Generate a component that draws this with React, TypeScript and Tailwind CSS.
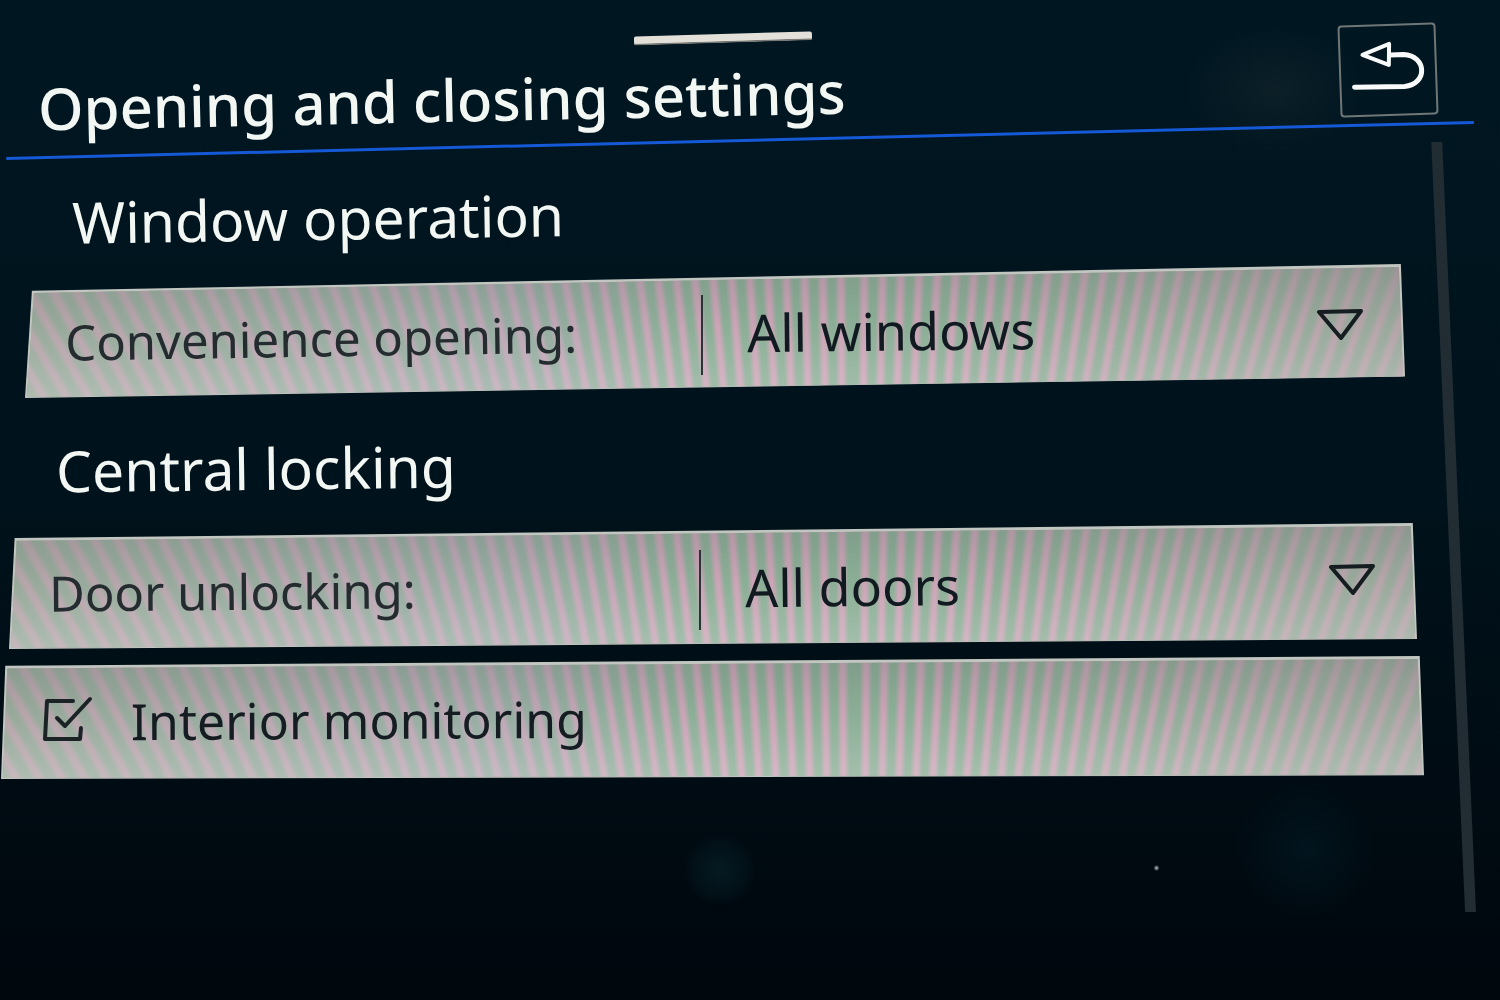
import { useState } from "react";
import type { ReactNode } from "react";

type PanelProps = {
    shape: string;
    className: string;
    children: ReactNode;
};

function Panel({ shape, className, children }: PanelProps) {
    return (
        <div className={`relative flex items-center ${className}`}>
            <div className={`absolute inset-0 bg-[#c2c6c0] ${shape}`} />
            <div className={`absolute inset-x-[2px] top-[3px] bottom-px bg-[#a5aaa4] ${shape}`}>
                <div className="absolute inset-0 bg-[repeating-conic-gradient(from_0deg_at_60%_1500px,#8bae96_0deg,#8bae96_0.2deg,#cba4b6_0.4deg,#cba4b6_0.5deg,#8bae96_0.7deg)]" />
                <div className="absolute inset-0 bg-[linear-gradient(90deg,#a3a59f88_0%,#a9a9b466_35%,#a0a9a000_50%,#a0a9a000_65%,#a5a5a199_100%)]" />
                <div className="absolute inset-0 bg-[linear-gradient(180deg,#5c666440_0%,#80808000_45%,#ffffff38_100%)]" />
            </div>
            {children}
        </div>
    );
}

type SelectRowProps = {
    id: string;
    label: string;
    options: string[];
    shape: string;
    className: string;
    tilt: string;
    pad: string;
};

function SelectRow({ id, label, options, shape, className, tilt, pad }: SelectRowProps) {
    return (
        <Panel shape={shape} className={className}>
            <label htmlFor={id} className={`relative w-[49%] whitespace-nowrap text-[49px] leading-[64px] text-[#252c30] ${pad} ${tilt}`}>
                {label}
            </label>
            <div className="relative flex flex-1 items-center pb-1">
                <div className="mt-3 h-20 w-[2px] bg-[#2c3336]" />
                <select
                    id={id}
                    className="h-20 flex-1 rotate-[-0.6deg] cursor-pointer appearance-none bg-transparent pl-11 text-[52px] leading-[64px] text-[#101a20] outline-none"
                >
                    {options.map((option) => (
                        <option key={option}>{option}</option>
                    ))}
                </select>
                <svg viewBox="0 0 46 32" className="pointer-events-none absolute right-[42px] mb-2 h-8 w-[46px]" fill="none" stroke="#151d21" strokeWidth="4" strokeLinejoin="round">
                    <path d="M2 3 L44 2 L24 29 Z" />
                </svg>
            </div>
        </Panel>
    );
}

export default function App() {
    const [monitoring, setMonitoring] = useState(true);

    return (
        <main className="relative min-h-screen overflow-hidden bg-linear-to-b from-[#001722] via-[#00121b] to-[#00070d] font-['Noto_Sans',sans-serif] text-[#f2f7f4]">
            {/* smudges and dust on the glass */}
            <div className="pointer-events-none absolute inset-0 bg-[radial-gradient(circle_at_77.1%_86.8%,#b9c6c6_0px,transparent_3px),radial-gradient(circle_at_48%_87%,#0a2d3577_0px,#0a2d3533_26px,transparent_36px),radial-gradient(ellipse_at_85%_9%,#24323555_0px,transparent_90px),radial-gradient(circle_at_87%_85%,#04243066_0px,transparent_70px)]" />

            <div className="relative flex h-[78px] justify-center pt-[34px] pr-[54px]">
                <div className="h-[9px] w-[178px] rotate-[-1.7deg] rounded-xs border-b-2 border-[#777a76] bg-[#e3e0d9]" />
            </div>

            <header className="relative -mt-[54px] flex items-start justify-between pr-[63px] pl-[38px]">
                <h1 className="mt-10 origin-center rotate-[-1.2deg] text-[58px] leading-[72px] font-medium">
                    Opening and closing settings
                </h1>
                <button
                    type="button"
                    aria-label="Back"
                    className="flex h-[92px] w-[98px] rotate-[-2deg] items-center justify-center rounded-sm border-2 border-[#6f7677] pb-2"
                >
                    <svg viewBox="0 0 76 56" className="h-14 w-[76px]" fill="none" stroke="#f8fbfa" strokeWidth="5" strokeLinecap="round" strokeLinejoin="round">
                        <path d="M13 16 L40 6 L39 27 Z" strokeWidth="4" />
                        <path d="M41 17 H54 C78 19 77 48 54 49 L4 48" />
                    </svg>
                </button>
            </header>
            <div className="relative mt-[3px] mr-[26px] ml-[6px] h-[3px] rotate-[-1.4deg] bg-[#1559d6]" />

            <div className="relative flex">
                <div className="flex-1">
                    <section>
                        <h2 className="mt-10 ml-[72px] w-fit rotate-[-0.9deg] text-[57px] leading-[72px]">Window operation</h2>
                        <SelectRow
                            id="convenience"
                            label="Convenience opening:"
                            options={["All windows", "Driver window", "Off"]}
                            shape="[clip-path:polygon(0.5%_20%,99.7%_0,100%_84%,0_100%)]"
                            className="mt-[10px] mr-[19px] ml-[25px] h-[134px]"
                            tilt="rotate-[-0.9deg]"
                            pad="pt-3 pl-10"
                        />
                    </section>

                    <section>
                        <h2 className="mt-[34px] ml-[56px] w-fit rotate-[-0.7deg] text-[57px] leading-[72px]">Central locking</h2>
                        <SelectRow
                            id="unlocking"
                            label="Door unlocking:"
                            options={["All doors", "Single door", "Vehicle side"]}
                            shape="[clip-path:polygon(0.4%_12%,99.7%_0,100%_92%,0_100%)]"
                            className="mt-[19px] mr-[7px] ml-[9px] h-[126px]"
                            tilt="rotate-[-0.5deg]"
                            pad="pt-2 pl-10"
                        />
                        <Panel
                            shape="[clip-path:polygon(0.3%_8%,99.7%_0,100%_97%,0_100%)]"
                            className="mt-[7px] ml-[1px] h-[123px]"
                        >
                            <label className="relative flex flex-1 cursor-pointer items-center gap-[38px] pt-1 pl-10 text-[50px] leading-[64px] text-[#151d22]">
                                <input
                                    type="checkbox"
                                    checked={monitoring}
                                    onChange={(e) => setMonitoring(e.target.checked)}
                                    className="absolute h-12 w-[52px] cursor-pointer appearance-none"
                                />
                                <svg viewBox="0 0 52 48" className="pointer-events-none h-12 w-[52px]" fill="none" stroke="#1b2327" strokeWidth="4" strokeLinejoin="round" strokeLinecap="round">
                                    <path d="M32 5 H6 L4 43 H39 L40 32" />
                                    {monitoring && <path d="M16 22 L24 30 L49 3" />}
                                </svg>
                                <span className="rotate-[-0.3deg]">Interior monitoring</span>
                            </label>
                        </Panel>
                    </section>
                </div>
                <div className="mr-6 h-[770px] w-[52px] bg-[#222d33] [clip-path:polygon(14%_0,35%_0,100%_100%,79%_100%)]" />
            </div>
        </main>
    );
}
